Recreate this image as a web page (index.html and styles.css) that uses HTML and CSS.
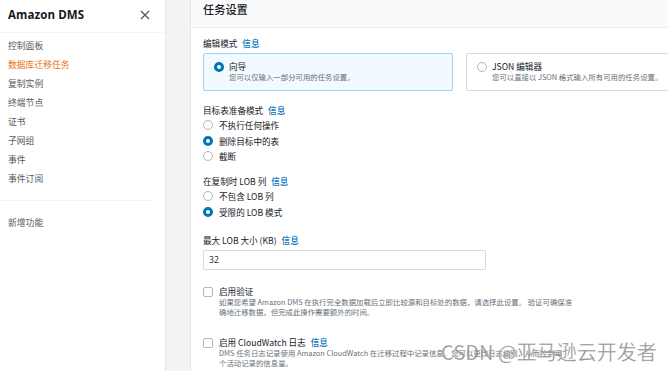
FILE: index.html
```html
<!DOCTYPE html>
<html lang="zh">
<head>
<meta charset="utf-8">
<link rel="stylesheet" href="styles.css">
</head>
<body>
<div class="app">
  <aside class="sidebar">
    <div class="side-head">
      <span class="brand">Amazon DMS</span>
      <svg class="close" width="10" height="10" viewBox="0 0 10 10"><path d="M1 1L9 9M9 1L1 9" stroke="#545b64" stroke-width="1.3" fill="none"/></svg>
    </div>
    <ul class="nav">
      <li>控制面板</li>
      <li class="active">数据库迁移任务</li>
      <li>复制实例</li>
      <li>终端节点</li>
      <li>证书</li>
      <li>子网组</li>
      <li>事件</li>
      <li>事件订阅</li>
    </ul>
    <div class="side-div"></div>
    <ul class="nav nav2">
      <li>新增功能</li>
    </ul>
  </aside>
  <div class="gutter"></div>
  <main class="panel">
    <div class="panel-head">任务设置</div>
    <div class="panel-body">
      <div class="label first">编辑模式 <a class="info">信息</a></div>
      <div class="cards">
        <div class="card selected">
          <span class="radio on"></span>
          <div class="card-text">
            <div class="card-title">向导</div>
            <div class="desc">您可以仅输入一部分可用的任务设置。</div>
          </div>
        </div>
        <div class="card">
          <span class="radio"></span>
          <div class="card-text">
            <div class="card-title">JSON 编辑器</div>
            <div class="desc">您可以直接以 JSON 格式输入所有可用的任务设置。</div>
          </div>
        </div>
      </div>

      <div class="label l2">目标表准备模式 <a class="info">信息</a></div>
      <div class="opts">
        <div class="opt"><span class="radio"></span>不执行任何操作</div>
        <div class="opt"><span class="radio on"></span>删除目标中的表</div>
        <div class="opt"><span class="radio"></span>截断</div>
      </div>

      <div class="label l3">在复制时 LOB 列 <a class="info">信息</a></div>
      <div class="opts">
        <div class="opt"><span class="radio"></span>不包含 LOB 列</div>
        <div class="opt"><span class="radio on"></span>受限的 LOB 模式</div>
      </div>

      <div class="label l4">最大 LOB 大小 (KB) <a class="info">信息</a></div>
      <div class="input">32</div>

      <div class="check c1">
        <span class="box"></span>
        <div>
          <div class="check-title">启用验证</div>
          <div class="desc">如果您希望 Amazon DMS 在执行完全数据加载后立即比较源和目标处的数据，请选择此设置。 验证可确保准<br>确地迁移数据，但完成此操作需要额外的时间。</div>
        </div>
      </div>

      <div class="check c2">
        <span class="box"></span>
        <div>
          <div class="check-title">启用 CloudWatch 日志 <a class="info">信息</a></div>
          <div class="desc">DMS 任务日志记录使用 Amazon CloudWatch 在迁移过程中记录信息。您可以更改日志级别，从而控制每<br>个活动记录的信息量。</div>
        </div>
      </div>
    </div>
  </main>
</div>
<div class="watermark">CSDN @亚马逊云开发者</div>
</body>
</html>
```

FILE: styles.css
```css
* { box-sizing: border-box; }
html, body { margin: 0; padding: 0; }
body {
  width: 668px;
  height: 371px;
  overflow: hidden;
  background: #f2f3f3;
  font-family: "Noto Sans CJK SC", "Open Sans", sans-serif;
  color: #16191f;
  position: relative;
}
.app { display: flex; height: 371px; }

.sidebar {
  width: 166px;
  flex: none;
  background: #fff;
  border-right: 1px solid #e4e7e7;
}
.side-head {
  height: 33px;
  display: flex;
  align-items: center;
  justify-content: space-between;
  padding: 0 15px 4px 8px;
  border-bottom: 1px solid #f4f5f5;
}
.brand { font-family: "Open Sans", sans-serif; font-weight: 700; font-size: 11.5px; letter-spacing: 0.1px; }
.close { display: block; margin-top: 1px; }
.nav { list-style: none; margin: 0; padding: 3px 0 0 8px; }
.nav li { height: 19px; line-height: 19px; font-size: 8.8px; color: #545b64; }
.nav li.active { color: #ec7211; }
.side-div { width: 153px; border-top: 1px solid #f2f3f3; margin-top: 12px; }
.nav2 { padding-top: 12px; }

.gutter { width: 24px; flex: none; }

.panel {
  flex: 1;
  background: #fff;
  border-left: 1px solid #e4e7e7;
  min-width: 0;
}
.panel-head {
  height: 28px;
  background: #fafafa;
  border-bottom: 1px solid #eaeded;
  padding: 1px 0 0 12px;
  font-size: 11.2px;
  font-weight: 500;
  line-height: 16px;
}
.panel-body { padding-left: 12px; }

.label { font-size: 8.6px; line-height: 12px; color: #16191f; }
.info { color: #0073bb; margin-left: 3px; font-weight: 500; }
.label.first { margin-top: 9px; }

.cards { display: flex; gap: 13px; margin-top: 4px; width: 520px; }
.card {
  width: 250px;
  flex: none;
  height: 38px;
  border: 1px solid #d5dbdb;
  border-radius: 2px;
  display: flex;
  align-items: flex-start;
  padding: 7px 0 0 10px;
  background: #fff;
}
.card.selected { border-color: #99d5ea; background: #f1faff; }
.card .radio { margin-top: 1px; }
.card-text { margin-left: 5px; }
.card-title { font-size: 8.6px; line-height: 11px; }

.desc { font-size: 7.4px; line-height: 10px; color: #687078; }

.radio {
  width: 10px;
  height: 10px;
  border-radius: 50%;
  border: 1px solid #aab7b8;
  background: #fff;
  flex: none;
  display: inline-block;
}
.radio.on { border: 3px solid #0073bb; }

.l2 { margin-top: 13px; }
.l3 { margin-top: 11px; }
.l4 { margin-top: 15px; }

.opts { margin-top: 1px; }
.opt {
  display: flex;
  align-items: center;
  height: 15.7px;
  font-size: 8.6px;
  color: #16191f;
}
.opt .radio { margin: 0 6px 0 0; }

.input {
  margin-top: 4px;
  width: 283px;
  height: 20px;
  border: 1px solid #d5dbdb;
  border-radius: 2px;
  font-family: "Open Sans", sans-serif;
  font-size: 8.6px;
  line-height: 18px;
  padding-left: 5px;
}

.check { display: flex; align-items: flex-start; width: 420px; }
.check .box {
  width: 10px;
  height: 10px;
  border: 1px solid #aab7b8;
  border-radius: 2px;
  flex: none;
  margin: 2px 6px 0 0;
}
.check-title { font-size: 8.6px; line-height: 12px; }
.c1 { margin-top: 15px; }
.c2 { margin-top: 19px; }

.watermark {
  position: absolute;
  left: 441px;
  top: 338px;
  font-family: "Noto Sans CJK SC", sans-serif;
  font-weight: 400;
  font-size: 20px;
  line-height: 28px;
  color: rgba(130, 130, 130, 0.85);
  -webkit-text-stroke: 0.4px rgba(255,255,255,0.6);
  white-space: nowrap;
}
```
